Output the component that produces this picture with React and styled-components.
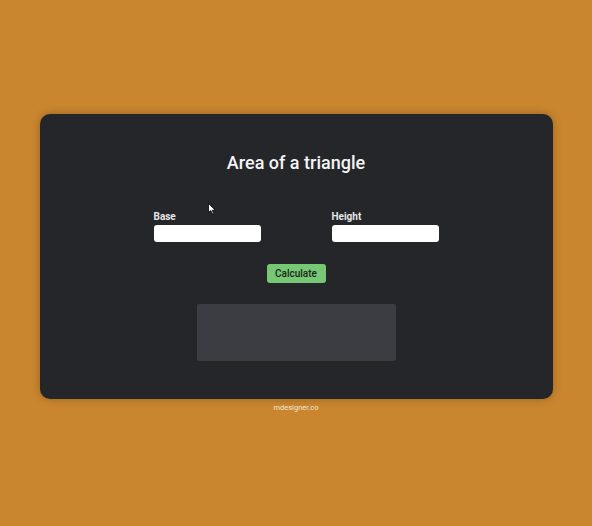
import styled, { createGlobalStyle } from "styled-components";

const GlobalStyle = createGlobalStyle`
  html, body {
    margin: 0;
    padding: 0;
    background: #c9862f;
  }
  body {
    font-family: Roboto, "Liberation Sans", sans-serif;
  }
`;

const Page = styled.div`
  width: 592px;
  height: 526px;
  display: flex;
  flex-direction: column;
  align-items: center;
  justify-content: center;
  background: #c9862f;
  position: relative;
`;

const Card = styled.div`
  width: 513px;
  height: 285px;
  box-sizing: border-box;
  background: #25262a;
  border-radius: 10px;
  box-shadow: 0 0 8px rgba(0, 0, 0, 0.25);
  display: flex;
  flex-direction: column;
  align-items: center;
  padding-top: 37px;
`;

const Title = styled.h1`
  margin: 0;
  font-size: 18px;
  font-weight: 500;
  color: #f4f4f4;
  line-height: 24px;
`;

const Fields = styled.div`
  display: flex;
  gap: 71px;
  margin-top: 36px;
`;

const Field = styled.label`
  display: flex;
  flex-direction: column;
  gap: 2px;
`;

const Label = styled.span`
  font-size: 10px;
  font-weight: 700;
  color: #e6e6e6;
  line-height: 12px;
`;

const Input = styled.input`
  width: 107px;
  height: 17px;
  box-sizing: border-box;
  border: none;
  border-radius: 3px;
  background: #ffffff;
  outline: none;
`;

const Button = styled.button`
  margin-top: 22px;
  width: 59px;
  height: 19px;
  border: none;
  border-radius: 3px;
  background: #77c874;
  color: #1a241a;
  font-family: Roboto, "Liberation Sans", sans-serif;
  font-size: 10px;
  font-weight: 500;
  padding: 0;
`;

const Result = styled.div`
  margin-top: 21px;
  width: 199px;
  height: 57px;
  background: #3c3d42;
  border-radius: 2px;
`;

const Footer = styled.div`
  margin-top: 3px;
  font-size: 7.5px;
  color: #f2e6d6;
  line-height: 11px;
`;

const Cursor = styled.svg`
  position: absolute;
  left: 208px;
  top: 203px;
`;

export default function App() {
  return (
    <>
      <GlobalStyle />
      <Page>
        <Card>
          <Title>Area of a triangle</Title>
          <Fields>
            <Field>
              <Label>Base</Label>
              <Input />
            </Field>
            <Field>
              <Label>Height</Label>
              <Input />
            </Field>
          </Fields>
          <Button>Calculate</Button>
          <Result />
        </Card>
        <Footer>mdesigner.co</Footer>
        <Cursor width="8" height="12" viewBox="0 0 8 12">
          <path d="M0.5 0.5 L0.5 9.5 L2.8 7.6 L4.3 11 L5.6 10.4 L4.2 7.2 L7.3 7.2 Z" fill="#ffffff" stroke="#000000" strokeWidth="0.8" />
        </Cursor>
      </Page>
    </>
  );
}
